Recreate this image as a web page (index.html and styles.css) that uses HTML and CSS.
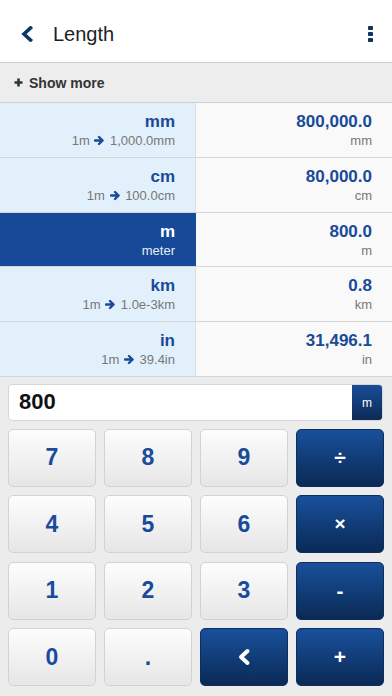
FILE: index.html
```html
<!DOCTYPE html>
<html>
<head>
<meta charset="utf-8">
<link rel="stylesheet" href="styles.css">
</head>
<body>
<div class="app">
  <header class="topbar">
    <svg class="back" width="14" height="16" viewBox="0 0 14 16"><path d="M10.5 2 L4 8 L10.5 14" fill="none" stroke="#0d3561" stroke-width="3.6" stroke-linecap="square" stroke-linejoin="miter"/></svg>
    <div class="title">Length</div>
    <div class="kebab"><span></span><span></span><span></span></div>
  </header>
  <div class="showmore"><svg class="plus" width="9" height="9" viewBox="0 0 9 9"><path d="M4.5 0.5 V8.5 M0.5 4.5 H8.5" stroke="#333" stroke-width="2.6"/></svg>Show more</div>
  <div class="list">
    <div class="row">
      <div class="unit"><div class="name">mm</div><div class="sub">1m <svg class="arr" width="11" height="11" viewBox="0 0 11 11"><path d="M1 5.5 H8 M5 2 L8.6 5.5 L5 9" fill="none" stroke="#1a4b9b" stroke-width="2.4" stroke-linecap="round" stroke-linejoin="round"/></svg> 1,000.0mm</div></div>
      <div class="val"><div class="num">800,000.0</div><div class="u">mm</div></div>
    </div>
    <div class="row">
      <div class="unit"><div class="name">cm</div><div class="sub">1m <svg class="arr" width="11" height="11" viewBox="0 0 11 11"><path d="M1 5.5 H8 M5 2 L8.6 5.5 L5 9" fill="none" stroke="#1a4b9b" stroke-width="2.4" stroke-linecap="round" stroke-linejoin="round"/></svg> 100.0cm</div></div>
      <div class="val"><div class="num">80,000.0</div><div class="u">cm</div></div>
    </div>
    <div class="row selected">
      <div class="unit"><div class="name">m</div><div class="sub">meter</div></div>
      <div class="val"><div class="num">800.0</div><div class="u">m</div></div>
    </div>
    <div class="row">
      <div class="unit"><div class="name">km</div><div class="sub">1m <svg class="arr" width="11" height="11" viewBox="0 0 11 11"><path d="M1 5.5 H8 M5 2 L8.6 5.5 L5 9" fill="none" stroke="#1a4b9b" stroke-width="2.4" stroke-linecap="round" stroke-linejoin="round"/></svg> 1.0e-3km</div></div>
      <div class="val"><div class="num">0.8</div><div class="u">km</div></div>
    </div>
    <div class="row">
      <div class="unit"><div class="name">in</div><div class="sub">1m <svg class="arr" width="11" height="11" viewBox="0 0 11 11"><path d="M1 5.5 H8 M5 2 L8.6 5.5 L5 9" fill="none" stroke="#1a4b9b" stroke-width="2.4" stroke-linecap="round" stroke-linejoin="round"/></svg> 39.4in</div></div>
      <div class="val"><div class="num">31,496.1</div><div class="u">in</div></div>
    </div>
  </div>
  <div class="pad">
    <div class="input">
      <div class="entry">800</div>
      <div class="unitbtn">m</div>
    </div>
    <div class="keys">
      <div class="key">7</div>
      <div class="key">8</div>
      <div class="key">9</div>
      <div class="key op">÷</div>
      <div class="key">4</div>
      <div class="key">5</div>
      <div class="key">6</div>
      <div class="key op small">×</div>
      <div class="key">1</div>
      <div class="key">2</div>
      <div class="key">3</div>
      <div class="key op">-</div>
      <div class="key">0</div>
      <div class="key">.</div>
      <div class="key op"><svg width="14" height="18" viewBox="0 0 14 18"><path d="M10.5 3 L4 9 L10.5 15" fill="none" stroke="#fff" stroke-width="4" stroke-linecap="round" stroke-linejoin="round"/></svg></div>
      <div class="key op">+</div>
    </div>
  </div>
</div>
</body>
</html>
```

FILE: styles.css
```css
* { box-sizing: border-box; }
html, body { margin: 0; padding: 0; }
body {
  width: 392px;
  height: 696px;
  overflow: hidden;
  font-family: "Liberation Sans", Arial, sans-serif;
  background: #ececec;
}
.app { display: flex; flex-direction: column; height: 696px; }

.topbar {
  height: 63px;
  background: #fff;
  border-bottom: 1px solid #cfcfcf;
  display: flex;
  align-items: center;
  padding: 6px 0 0 20px;
}
.back { display: block; }
.title {
  margin-left: 19px;
  font-size: 20px;
  color: #1e1e1e;
  margin-top: 1px;
}
.kebab {
  margin-left: auto;
  margin-right: 19px;
  display: flex;
  flex-direction: column;
  gap: 1.6px;
}
.kebab span { width: 4.6px; height: 4.6px; background: #0d3561; border-radius: 0.8px; }

.showmore {
  height: 40px;
  background: #ededed;
  border-bottom: 1px solid #cfcfcf;
  display: flex;
  align-items: center;
  padding-left: 14px;
  font-size: 14px;
  font-weight: bold;
  color: #333;
}
.plus { display: block; margin-right: 6px; }

.list { display: flex; flex-direction: column; }
.row {
  height: 54.8px;
  display: flex;
  border-bottom: 1px solid #d6d6d6;
}
.unit {
  width: 196px;
  background: #e1f0fb;
  border-right: 1px solid #d9dfe4;
  text-align: right;
  padding: 9px 20px 0 0;
}
.val {
  flex: 1;
  background: #f9f9f9;
  text-align: right;
  padding: 9px 20px 0 0;
}
.name, .num {
  font-size: 17px;
  font-weight: bold;
  color: #184a98;
  line-height: 20px;
}
.sub, .u {
  font-size: 13px;
  color: #777;
  line-height: 16px;
  margin-top: 1px;
}
.arr { vertical-align: -1px; margin: 0 1px; }
.row.selected .unit { background: #164a99; border-right-color: #164a99; }
.row.selected .name { color: #fff; }
.row.selected .sub { color: #e6ecf5; }

.pad {
  flex: 1;
  background: #ececec;
  padding: 7px 8px 0 8px;
}
.input {
  height: 37px;
  background: #fff;
  border: 1px solid #d6d6d6;
  border-radius: 4px;
  display: flex;
  overflow: hidden;
  margin-right: 1px;
}
.entry {
  flex: 1;
  font-size: 22px;
  font-weight: bold;
  color: #111;
  padding-left: 10px;
  display: flex;
  align-items: center;
}
.unitbtn {
  width: 30px;
  background: linear-gradient(#1a4c98, #0c2b56);
  color: #fff;
  font-size: 12px;
  display: flex;
  align-items: center;
  justify-content: center;
  padding-top: 2px;
}
.keys {
  margin-top: 8px;
  display: grid;
  grid-template-columns: repeat(4, 1fr);
  grid-auto-rows: 58px;
  column-gap: 8px;
  row-gap: 8.4px;
}
.key {
  background: linear-gradient(#fdfdfd, #e6e6e6);
  border: 1px solid #d2d2d2;
  border-radius: 5px;
  display: flex;
  align-items: center;
  justify-content: center;
  font-size: 23px;
  font-weight: bold;
  color: #1a4b9b;
}
.key.op {
  background: linear-gradient(#19509c, #0a2a55);
  border-color: #0e2f5c;
  color: #fff;
  font-size: 21px;
}
.key.op.small { font-size: 19px; }
```
